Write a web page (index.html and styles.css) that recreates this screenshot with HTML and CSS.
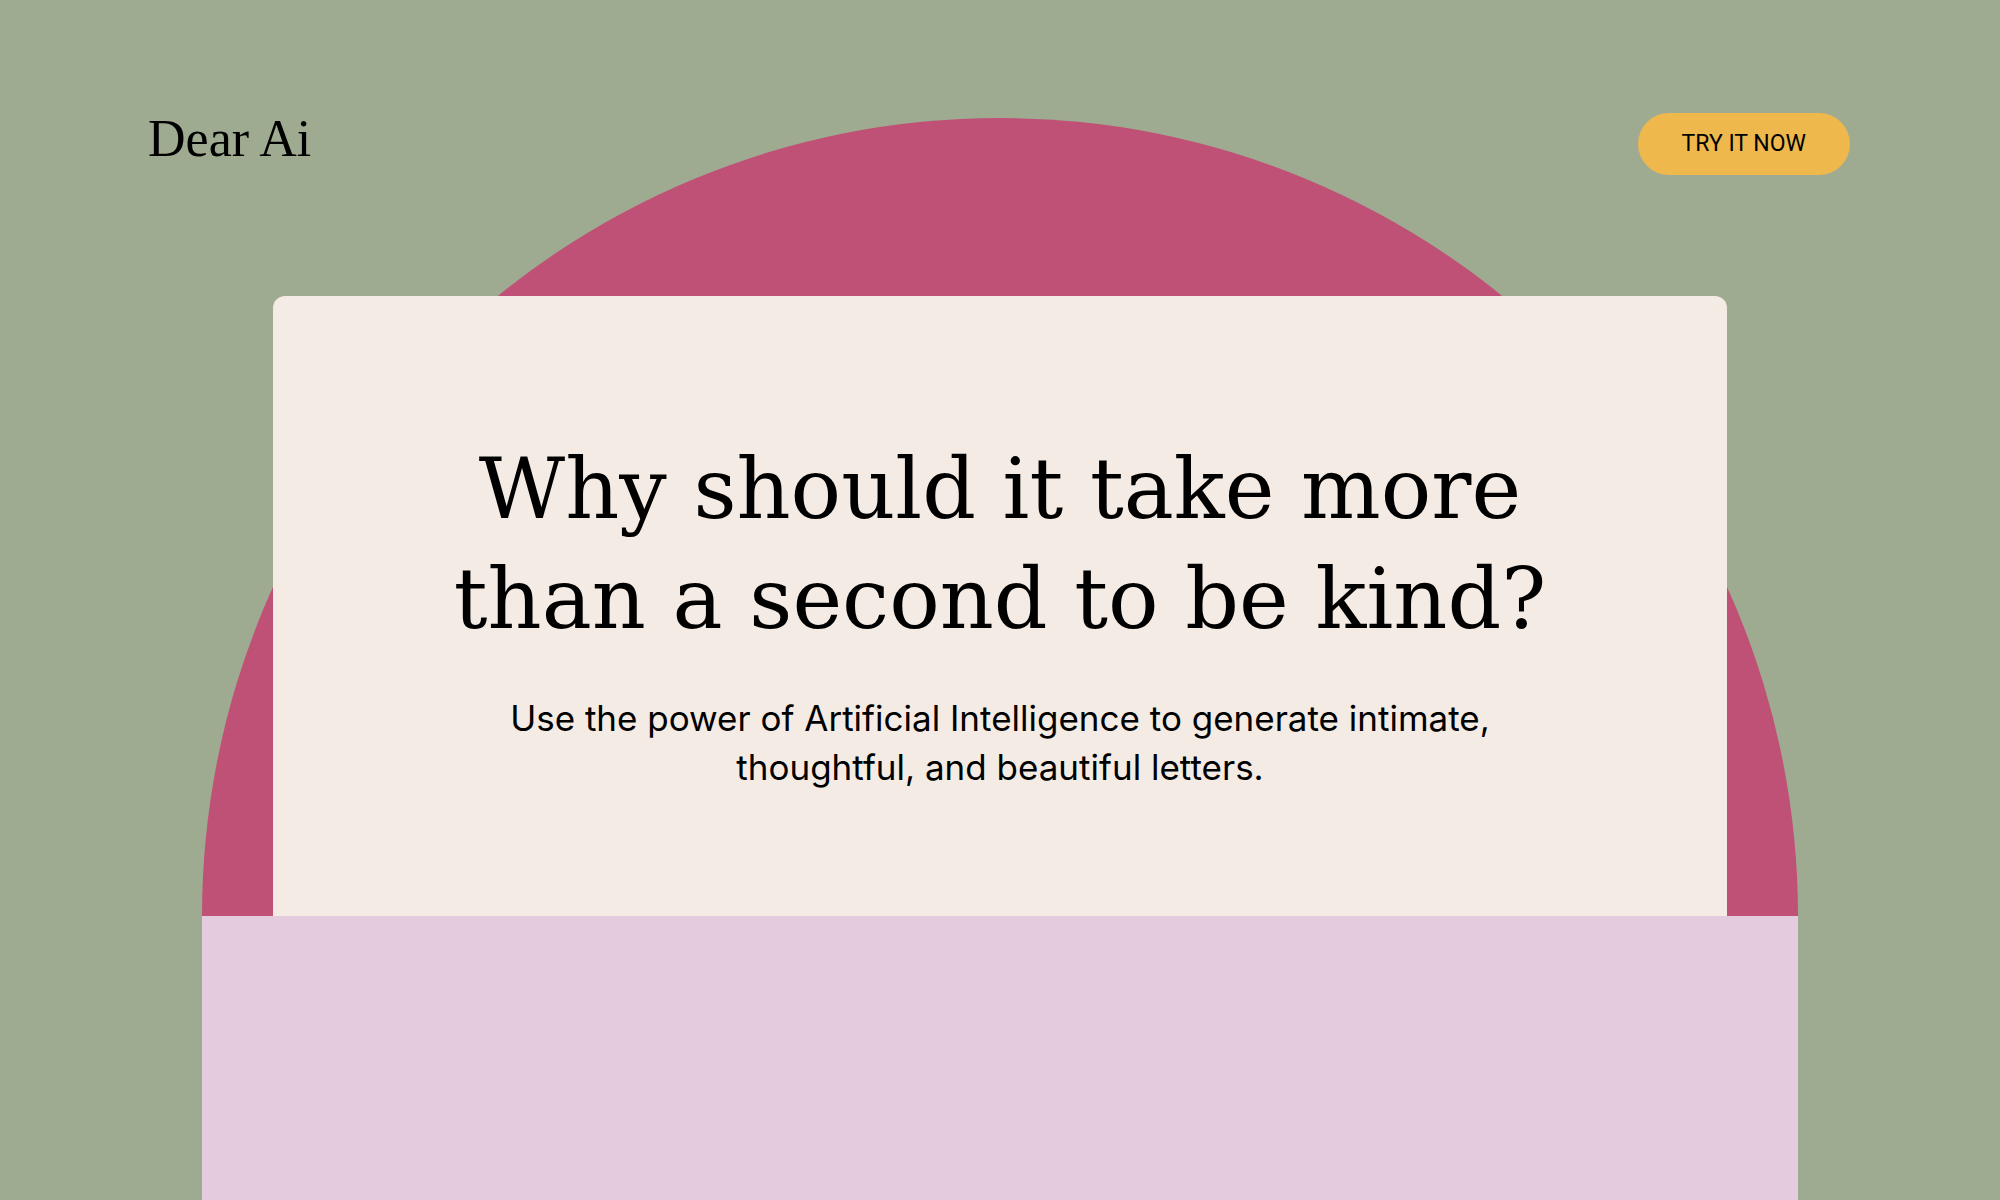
FILE: index.html
```html
<!DOCTYPE html>
<html lang="en">
<head>
<meta charset="utf-8">
<meta name="viewport" content="width=device-width, initial-scale=1">
<title>Dear Ai</title>
<link rel="stylesheet" href="styles.css">
</head>
<body>
<div class="page">
  <header class="header">
    <a class="logo" href="#">Dear Ai</a>
    <button class="cta" type="button">TRY IT NOW</button>
  </header>
  <main class="envelope">
    <section class="flap">
      <div class="card">
        <h1 class="title">Why should it take more<br>than a second to be kind?</h1>
        <p class="lead">Use the power of Artificial Intelligence to generate intimate,<br>thoughtful, and beautiful letters.</p>
      </div>
    </section>
    <div class="pocket"></div>
  </main>
</div>
</body>
</html>
```

FILE: styles.css
```css
* {
  box-sizing: border-box;
}

body {
  margin: 0;
  background: #9fab91;
  color: #000;
  font-family: Inter, sans-serif;
}

/* The header and the envelope share one grid cell, so the flap rises behind the header. */
.page {
  display: grid;
  min-height: 100vh;
}

.header,
.envelope {
  grid-area: 1 / 1;
}

.header {
  z-index: 1;
  display: flex;
  justify-content: space-between;
  align-items: flex-start;
  align-self: start;
  padding: 113px 150px 0 148px;
}

.logo {
  color: #000;
  font-family: "Liberation Serif", serif;
  font-size: 52px;
  line-height: 52px;
  text-decoration: none;
}

.cta {
  height: 62px;
  padding: 0 44px;
  border: 0;
  border-radius: 31px;
  background: #efb84c;
  color: #000;
  font-family: Roboto, sans-serif;
  font-size: 23px;
  line-height: 28px;
  cursor: pointer;
}

.envelope {
  display: flex;
  flex-direction: column;
  padding: 118px 202px 0;
}

.flap {
  display: flex;
  aspect-ratio: 2 / 1;
  padding: 178px 71px 0;
  border-radius: 50% 50% 0 0 / 100% 100% 0 0;
  background: #bf5177;
}

.card {
  flex: 1;
  padding: 138px 40px 100px;
  border-radius: 12px 12px 0 0;
  background: #f4ebe4;
  text-align: center;
}

.title {
  margin: 0;
  font-family: "DejaVu Serif", serif;
  font-size: 84px;
  font-weight: 400;
  line-height: 110px;
}

.lead {
  margin: 40px 0 0;
  font-size: 35px;
  line-height: 49px;
}

.pocket {
  flex: 1;
  background: #e4cbde;
}
```
